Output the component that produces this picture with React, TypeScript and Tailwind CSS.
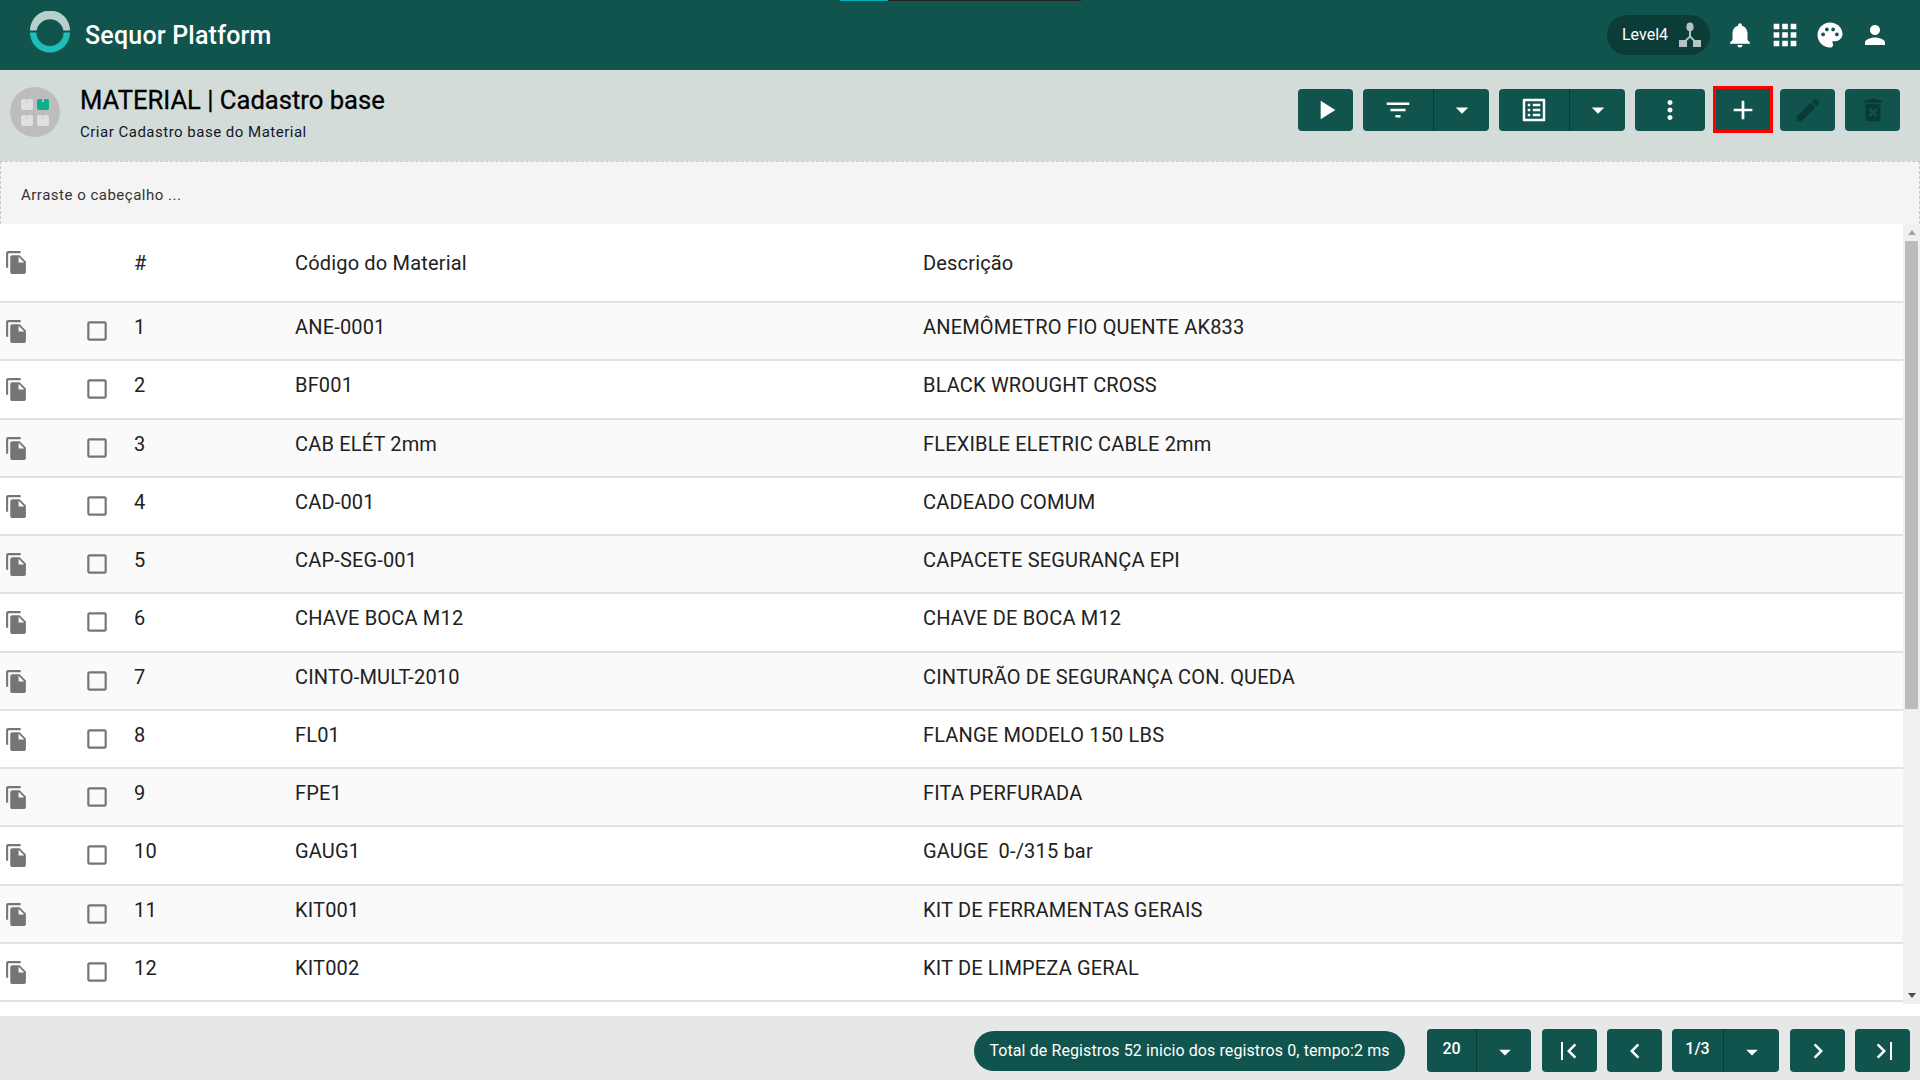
import React from "react";
import {
  MdPlayArrow, MdFilterList, MdArrowDropDown, MdOutlineListAlt, MdMoreVert, MdAdd, MdEdit, MdDeleteForever,
  MdNotifications, MdApps, MdPalette, MdPerson, MdFileCopy, MdCheckBoxOutlineBlank, MdChevronLeft, MdChevronRight,
} from "react-icons/md";

const rows: [string, string, string][] = [
  ["1", "ANE-0001", "ANEMÔMETRO FIO QUENTE AK833"],
  ["2", "BF001", "BLACK WROUGHT CROSS"],
  ["3", "CAB ELÉT 2mm", "FLEXIBLE ELETRIC CABLE 2mm"],
  ["4", "CAD-001", "CADEADO COMUM"],
  ["5", "CAP-SEG-001", "CAPACETE SEGURANÇA EPI"],
  ["6", "CHAVE BOCA M12", "CHAVE DE BOCA M12"],
  ["7", "CINTO-MULT-2010", "CINTURÃO DE SEGURANÇA CON. QUEDA"],
  ["8", "FL01", "FLANGE MODELO 150 LBS"],
  ["9", "FPE1", "FITA PERFURADA"],
  ["10", "GAUG1", "GAUGE  0-/315 bar"],
  ["11", "KIT001", "KIT DE FERRAMENTAS GERAIS"],
  ["12", "KIT002", "KIT DE LIMPEZA GERAL"],
];

function Logo() {
  return (
    <svg width="42" height="42" viewBox="0 0 42 42" className="shrink-0">
      <path d="M1 19.5 A20 20 0 0 1 41 19.5 L34.4 19.5 A13.6 13.6 0 0 0 7.6 19.5 Z" fill="#b8d0cc" />
      <path d="M1 21.5 A20 20 0 0 0 41 21.5 L34.6 21.5 A13.6 13.6 0 0 1 7.4 21.5 Z" fill="#20bdb8" />
    </svg>
  );
}

function ModuleIcon() {
  return (
    <div className="w-[50px] h-[50px] rounded-full bg-[#bdbdbd] flex items-center justify-center shrink-0">
      <svg width="30" height="28" viewBox="0 0 30 28">
        <rect x="1" y="1" width="12" height="11" rx="2" fill="#e0e0e0" />
        <rect x="17" y="1" width="12" height="11" rx="2" fill="#0fae8c" />
        <rect x="1" y="17" width="12" height="11" rx="2" fill="#e0e0e0" />
        <rect x="17" y="17" width="12" height="11" rx="2" fill="#e0e0e0" />
        <rect x="6" y="1" width="2" height="4" fill="#d2d2d2" />
        <rect x="22" y="1" width="2" height="3" fill="#bdbdbd" />
        <rect x="6" y="17" width="2" height="4" fill="#d2d2d2" />
        <rect x="22" y="17" width="2" height="4" fill="#d2d2d2" />
      </svg>
    </div>
  );
}

function LevelIcon() {
  return (
    <svg width="22" height="26" viewBox="0 0 22 26" fill="#b5c4c1">
      <ellipse cx="11" cy="5" rx="3.6" ry="4.4" />
      <rect x="0" y="18" width="8" height="7" />
      <rect x="14" y="18" width="8" height="7" />
      <path d="M10 8h2v6l6 6-1.4 1.4L11 15.8 5.4 21.4 4 20l6-6z" />
    </svg>
  );
}

function Btn({ w, children }: { w: string; children: React.ReactNode }) {
  return <div className={`${w} h-[42px] rounded-[4px] bg-[#11544e] flex items-center justify-center text-white`}>{children}</div>;
}

function FootBtn({ children }: { children: React.ReactNode }) {
  return <div className="w-[55px] h-[43px] rounded-[4px] bg-[#11544e] flex items-center justify-center text-white">{children}</div>;
}

function Split({ left }: { left: React.ReactNode }) {
  return (
    <div className="w-[126px] h-[42px] rounded-[4px] bg-[#11544e] flex text-white">
      <div className="w-[71px] border-r border-[#0b3b37] flex items-center justify-center">{left}</div>
      <div className="flex-1 flex items-center justify-center"><MdArrowDropDown size={30} /></div>
    </div>
  );
}

function FootSplit({ label, w, lw, extra = "" }: { label: string; w: string; lw: string; extra?: string }) {
  return (
    <div className={`${w} ${extra} h-[43px] rounded-[4px] bg-[#11544e] flex text-white`}>
      <div className={`${lw} border-r border-[#0b3b37] flex justify-center pt-[10px] text-[16px] font-medium leading-[20px]`}>{label}</div>
      <div className="flex-1 flex items-center justify-center pt-[3px] pl-[1px]"><MdArrowDropDown size={28} /></div>
    </div>
  );
}

export default function App() {
  return (
    <div className="relative w-[1920px] h-[1080px] overflow-hidden flex flex-col bg-white text-[#212121]" style={{ fontFamily: "Roboto, sans-serif" }}>
      <div className="absolute left-[840px] top-0 w-[48px] h-px bg-[#00b5b8]" />
      <div className="absolute left-[888px] top-0 w-[193px] h-px bg-[#222222]" />

      <header className="h-[70px] shrink-0 bg-[#11544e] flex items-center pl-[29px] pr-[30px]">
        <div className="mt-[-6px]"><Logo /></div>
        <div className="ml-[14px] text-[25px] tracking-[0.2px] font-medium text-white leading-none">Sequor Platform</div>
        <div className="ml-auto flex items-center">
          <div className="w-[103px] h-[40px] rounded-full bg-[#0c3c38] flex items-center pl-[15px] gap-[11px] text-white text-[16px]">
            <span>Level4</span>
            <LevelIcon />
          </div>
          <div className="flex items-center ml-[15px] gap-[15px] text-white">
            <MdNotifications size={30} />
            <MdApps size={34} className="mx-[-2px]" />
            <MdPalette size={30} />
            <MdPerson size={30} />
          </div>
        </div>
      </header>

      <div className="h-[91px] shrink-0 bg-[#d3dcd9] flex items-start pl-[10px] pr-[20px]">
        <div className="mt-[17px]"><ModuleIcon /></div>
        <div className="ml-[20px] mt-[15px]">
          <div className="text-[25.6px] leading-[30px] font-normal text-black [-webkit-text-stroke:0.3px_black]">MATERIAL | Cadastro base</div>
          <div className="text-[15px] leading-[18px] mt-[8px] tracking-[0.5px] text-[#111827]">Criar Cadastro base do Material</div>
        </div>
        <div className="ml-auto mt-[16px] flex items-center gap-[10px]">
          <Btn w="w-[55px]"><MdPlayArrow size={32} /></Btn>
          <Split left={<MdFilterList size={30} />} />
          <Split left={<MdOutlineListAlt size={30} />} />
          <Btn w="w-[70px]"><MdMoreVert size={30} /></Btn>
          <div className="w-[60px] h-[47px] border-[3px] border-[#ff0000] bg-[#11544e] flex items-center justify-center text-white ml-[-2px] mr-[-3px]">
            <MdAdd size={32} />
          </div>
          <Btn w="w-[55px]"><MdEdit size={30} className="text-[#0b3b37]" /></Btn>
          <Btn w="w-[55px]"><MdDeleteForever size={30} className="text-[#0b3b37]" /></Btn>
        </div>
      </div>

      <div className="h-[63px] shrink-0 bg-[#f4f4f4] border-t border-x border-dashed border-[#c8c8c8] flex items-center pl-[20px] pt-[5px] text-[15px] tracking-[0.5px] text-[#333333]">
        Arraste o cabeçalho ...
      </div>

      <div className="h-[780px] shrink-0 flex">
        <div className="flex-1 min-w-0">
          <div className="h-[79px] flex border-b-2 border-[#e2e2e2] bg-white text-[20px] tracking-[0.17px]">
            <div className="w-[134px] flex shrink-0 pl-[4px] pt-[26px]"><MdFileCopy size={25} className="text-[#757575]" /></div>
            <div className="w-[161px] shrink-0 pt-[27px] leading-[24px]">#</div>
            <div className="w-[628px] shrink-0 pt-[27px] leading-[24px]">Código do Material</div>
            <div className="pt-[27px] leading-[24px]">Descrição</div>
          </div>
          {rows.map((r, i) => (
            <div key={r[0]} className={`h-[58.25px] flex border-b-2 border-[#e2e2e2] text-[20px] tracking-[0.17px] ${i % 2 === 0 ? "bg-[#fafafa]" : "bg-white"}`}>
              <div className="w-[84px] shrink-0 pl-[4px] pt-[16px]"><MdFileCopy size={25} className="text-[#757575]" /></div>
              <div className="w-[50px] shrink-0 pt-[15px]"><MdCheckBoxOutlineBlank size={26} className="text-[#757575] ml-[-0.5px]" /></div>
              <div className="w-[161px] shrink-0 pt-[12px] leading-[24px]">{r[0]}</div>
              <div className="w-[628px] shrink-0 pt-[12px] leading-[24px]">{r[1]}</div>
              <div className="pt-[12px] leading-[24px] whitespace-pre">{r[2]}</div>
            </div>
          ))}
        </div>
        <div className="w-[17px] shrink-0 bg-[#f0f0f0] flex flex-col items-center">
          <div className="h-[17px] flex items-center justify-center">
            <div className="border-x-[4px] border-x-transparent border-b-[5px] border-b-[#a3a3a3]" />
          </div>
          <div className="w-[13px] h-[468px] bg-[#bcbcbc]" />
          <div className="mt-auto h-[17px] flex items-center justify-center">
            <div className="border-x-[4px] border-x-transparent border-t-[5px] border-t-[#505050]" />
          </div>
        </div>
      </div>

      <div className="h-[12px] shrink-0 bg-white" />

      <footer className="flex-1 bg-[#e6e8e8] flex items-center justify-end pr-[10px] pt-[5px]">
        <div className="flex items-center gap-[10px]">
          <div className="w-[431px] h-[40px] rounded-full bg-[#11544e] text-white text-[16px] tracking-[0.1px] flex items-center justify-center mr-[12px]">
            Total de Registros 52 inicio dos registros 0, tempo:2 ms
          </div>
          <FootSplit label="20" w="w-[104px]" lw="w-[50px]" extra="mr-[1px]" />
          <FootBtn><span className="flex items-center pl-[8px]"><span className="w-[2px] h-[18px] bg-white mr-[-6px]" /><MdChevronLeft size={30} /></span></FootBtn>
          <FootBtn><MdChevronLeft size={30} /></FootBtn>
          <FootSplit label="1/3" w="w-[107px]" lw="w-[52px]" extra="mr-[1px]" />
          <FootBtn><MdChevronRight size={30} /></FootBtn>
          <FootBtn><span className="flex items-center pr-[8px]"><MdChevronRight size={30} /><span className="w-[2px] h-[18px] bg-white ml-[-6px]" /></span></FootBtn>
        </div>
      </footer>
    </div>
  );
}
